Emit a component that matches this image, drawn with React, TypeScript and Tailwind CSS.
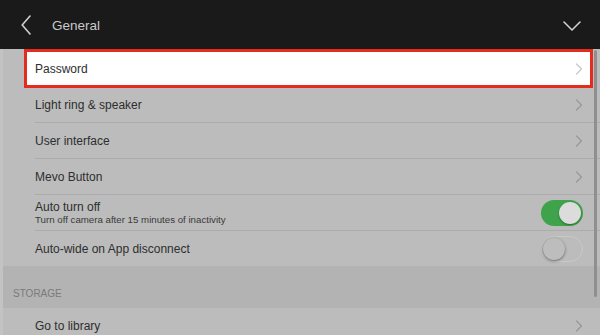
import React from "react";

function Chevron({ color = "#999999" }: { color?: string }) {
  return (
    <svg width="8" height="12" viewBox="0 0 8 12" fill="none">
      <path d="M1.5 1 L6.5 6 L1.5 11" stroke={color} strokeWidth="1.3" strokeLinecap="round" strokeLinejoin="round" />
    </svg>
  );
}

function Toggle({ on }: { on: boolean }) {
  if (on) {
    return (
      <div className="w-[42px] h-[26px] rounded-full bg-[#3ea34b] flex items-center justify-end pr-[2px]">
        <div className="w-[22px] h-[22px] rounded-full bg-[#dcdcdc] shadow-[0_1px_2px_rgba(0,0,0,0.35)]" />
      </div>
    );
  }
  return (
    <div className="w-[42px] h-[26px] rounded-full bg-[#bcbcbc] border-[1.5px] border-[#c9c9c9] flex items-center pl-[0.5px]">
      <div className="w-[22px] h-[22px] rounded-full bg-[#bdbdbd] shadow-[0_1px_3px_rgba(0,0,0,0.45)]" />
    </div>
  );
}

function Row({ label, sub, right, h = "h-[36px]", last }: { label: string; sub?: string; right: React.ReactNode; h?: string; last?: boolean }) {
  return (
    <div className="pl-[32px]">
      <div className={`${h} flex items-center justify-between pr-[17px] ${last ? "" : "border-b border-[#ababab]"}`}>
        <div className="flex flex-col">
          <span className="text-[12px] leading-[14px] text-[#2e2e2e]">{label}</span>
          {sub && <span className="text-[9.7px] leading-[12px] text-[#3a3a3a]">{sub}</span>}
        </div>
        {right}
      </div>
    </div>
  );
}

export default function App() {
  return (
    <div className="w-[600px] h-[335px] overflow-hidden bg-[#bcbcbc] relative" style={{ fontFamily: "'Liberation Sans', Arial, sans-serif" }}>
      <header className="h-[49px] bg-[#1a1a1a] flex items-center pl-[21px] pr-[19px]">
        <svg width="10" height="20" viewBox="0 0 10 20" fill="none">
          <path d="M9 1 L1.2 10 L9 19" stroke="#cfcfcf" strokeWidth="1.6" strokeLinecap="round" strokeLinejoin="round" />
        </svg>
        <span className="ml-[21px] pt-[3px] text-[13.5px] text-[#c9c9c9]">General</span>
        <svg className="ml-auto mt-[2px]" width="18" height="10" viewBox="0 0 18 10" fill="none">
          <path d="M1 1 L9 9 L17 1" stroke="#d0d0d0" strokeWidth="1.6" strokeLinecap="round" strokeLinejoin="round" />
        </svg>
      </header>

      <main className="border-l-[3px] border-[#c3c3c3]">
        <div className="ml-[21px] mr-[7px] h-[39px] border-[3px] border-[#e52a1e] bg-white flex items-center justify-between pl-[8px] pr-[7px]">
          <span className="text-[12px] text-[#2e2e2e]">Password</span>
          <Chevron color="#c8c8c8" />
        </div>
        <Row label="Light ring & speaker" h="h-[35px]" right={<Chevron />} />
        <Row label="User interface" right={<Chevron />} />
        <Row label="Mevo Button" right={<Chevron />} />
        <Row label="Auto turn off" sub="Turn off camera after 15 minutes of inactivity" right={<Toggle on />} />
        <Row label="Auto-wide on App disconnect" h="h-[35px]" last right={<Toggle on={false} />} />

        <div className="h-[42px] bg-[#b3b3b3] flex items-end pl-[10px] pb-[8px]">
          <span className="text-[10px] leading-[12px] text-[#7a7a7a]">STORAGE</span>
        </div>
        <Row label="Go to library" right={<Chevron />} />
      </main>

      <div className="absolute left-[594px] top-[50px] w-[3px] h-[247px] rounded-full bg-[#8f8f8f]" />
    </div>
  );
}
